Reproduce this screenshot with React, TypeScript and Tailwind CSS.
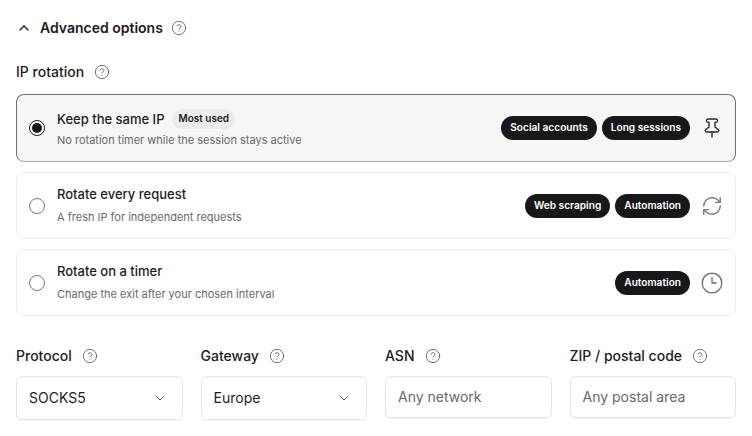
import { ChevronDown, ChevronUp, CircleHelp, RefreshCw } from "lucide-react";
import type { ReactNode } from "react";

const Help = () => <CircleHelp className="h-4 w-4 text-[#55585e]" strokeWidth={1.25} />;

// lucide's pin is tilted and its clock has a slanted hand, the picture has neither
const PinIcon = () => (
  <svg viewBox="0 0 22 22" fill="none" stroke="#2a2a2d" strokeWidth={1.4} strokeLinecap="round" strokeLinejoin="round" className="h-[22px] w-[22px]">
    <path d="M7 2h8a1.5 1.5 0 0 1 .8 2.8L14 5.5V10l3.2 2.5c.9.8.4 2.5-.8 2.5H5.6c-1.2 0-1.7-1.7-.8-2.5L8 10V5.5l-1.8-.7A1.5 1.5 0 0 1 7 2Z" />
    <path d="M11 15v5" />
  </svg>
);

const ClockIcon = () => (
  <svg viewBox="0 0 24 24" fill="none" stroke="#66686e" strokeWidth={1.4} strokeLinecap="round" strokeLinejoin="round" className="h-[22px] w-[22px]">
    <circle cx="12" cy="12" r="10.7" />
    <path d="M12 6.5V12h4.5" />
  </svg>
);

const Tag = ({ children }: { children: ReactNode }) => (
  <span className="flex h-6 items-center rounded-full bg-[#18181a] px-[9px] text-[10.15px] font-semibold whitespace-nowrap text-white">
    {children}
  </span>
);

type RowProps = {
  title: string;
  sub: string;
  tags: string[];
  icon: ReactNode;
  badge?: string;
  active?: boolean;
};

const OptionRow = ({ title, sub, tags, icon, badge, active }: RowProps) => (
  <div
    className={
      active
        ? "flex h-[68px] items-center rounded-lg border border-[#6f7076] border-b-[#a9a9ae] bg-[#f6f6f6] pr-[11px] pl-3"
        : "flex h-[67px] items-center rounded-lg border border-[#ececee] bg-white pr-[11px] pl-3"
    }
  >
    {active ? (
      <span className="flex h-4 w-4 items-center justify-center rounded-full border border-[#18181a] bg-white">
        <span className="h-[10px] w-[10px] rounded-full bg-[#18181a]" />
      </span>
    ) : (
      <span className="h-4 w-4 rounded-full border border-[#77787d] bg-white" />
    )}
    <div className="ml-3 flex-1">
      <div className={active ? "flex h-5 items-center gap-2" : "-mt-[2px] flex h-5 items-center gap-2"}>
        <span className="text-[13px] leading-5 font-medium text-[#1c1c1e]">{title}</span>
        {badge && (
          <span className="flex h-5 items-center rounded-full bg-[#ebebeb] px-[6px] text-[10px] font-semibold text-[#1c1c1e]">
            {badge}
          </span>
        )}
      </div>
      <p className={active ? "mt-[3px] text-[11px] leading-4 text-[#66686e]" : "mt-[5px] text-[11px] leading-4 text-[#66686e]"}>{sub}</p>
    </div>
    <div className="flex items-center gap-[5px]">
      {tags.map((t) => (
        <Tag key={t}>{t}</Tag>
      ))}
    </div>
    <div className="ml-[10px] flex w-[24px] justify-center">{icon}</div>
  </div>
);

const Field = ({ label, children }: { label: string; children: ReactNode }) => (
  <div>
    <div className="flex h-5 items-center gap-[10px] text-sm font-medium text-[#1c1c1e]">
      {label}
      <Help />
    </div>
    <div className="mt-[10px]">{children}</div>
  </div>
);

const Select = ({ value }: { value: string }) => (
  <div className="flex h-11 items-center justify-between rounded-md border border-[#e4e4e7] bg-white pr-[14px] pl-3 text-sm text-[#1c1c1e] shadow-[0_1px_1px_rgba(0,0,0,0.04)]">
    {value}
    <ChevronDown className="h-4 w-4 text-[#55585e]" strokeWidth={1.5} />
  </div>
);

const TextBox = ({ placeholder }: { placeholder: string }) => (
  <div className="flex h-[42px] items-center rounded-md border border-[#e4e4e7] bg-white px-3 text-sm text-[#66686e] shadow-[0_1px_1px_rgba(0,0,0,0.06)]">
    {placeholder}
  </div>
);

export default function App() {
  return (
    <div className="h-[436px] w-[752px] overflow-hidden bg-white px-4 font-['Inter',sans-serif]">
      <div className="flex h-[56px] items-center text-[#1c1c1e]">
        <ChevronUp className="h-4 w-4" strokeWidth={2} />
        <span className="ml-2 text-sm font-semibold">Advanced options</span>
        <span className="ml-2">
          <Help />
        </span>
      </div>
      <div className="mt-[6px] flex h-5 items-center gap-[10px] text-sm font-medium text-[#1c1c1e]">
        IP rotation
        <Help />
      </div>
      <div className="mt-3 flex flex-col gap-[10px]">
        <OptionRow
          active
          title="Keep the same IP"
          badge="Most used"
          sub="No rotation timer while the session stays active"
          tags={["Social accounts", "Long sessions"]}
          icon={<PinIcon />}
        />
        <OptionRow
          title="Rotate every request"
          sub="A fresh IP for independent requests"
          tags={["Web scraping", "Automation"]}
          icon={<RefreshCw className="h-[22px] w-[22px] text-[#77787d]" strokeWidth={1.5} />}
        />
        <OptionRow
          title="Rotate on a timer"
          sub="Change the exit after your chosen interval"
          tags={["Automation"]}
          icon={<ClockIcon />}
        />
      </div>
      <div className="mt-[30px] grid grid-cols-4 gap-[18px]">
        <Field label="Protocol">
          <Select value="SOCKS5" />
        </Field>
        <Field label="Gateway">
          <Select value="Europe" />
        </Field>
        <Field label="ASN">
          <TextBox placeholder="Any network" />
        </Field>
        <Field label="ZIP / postal code">
          <TextBox placeholder="Any postal area" />
        </Field>
      </div>
    </div>
  );
}
